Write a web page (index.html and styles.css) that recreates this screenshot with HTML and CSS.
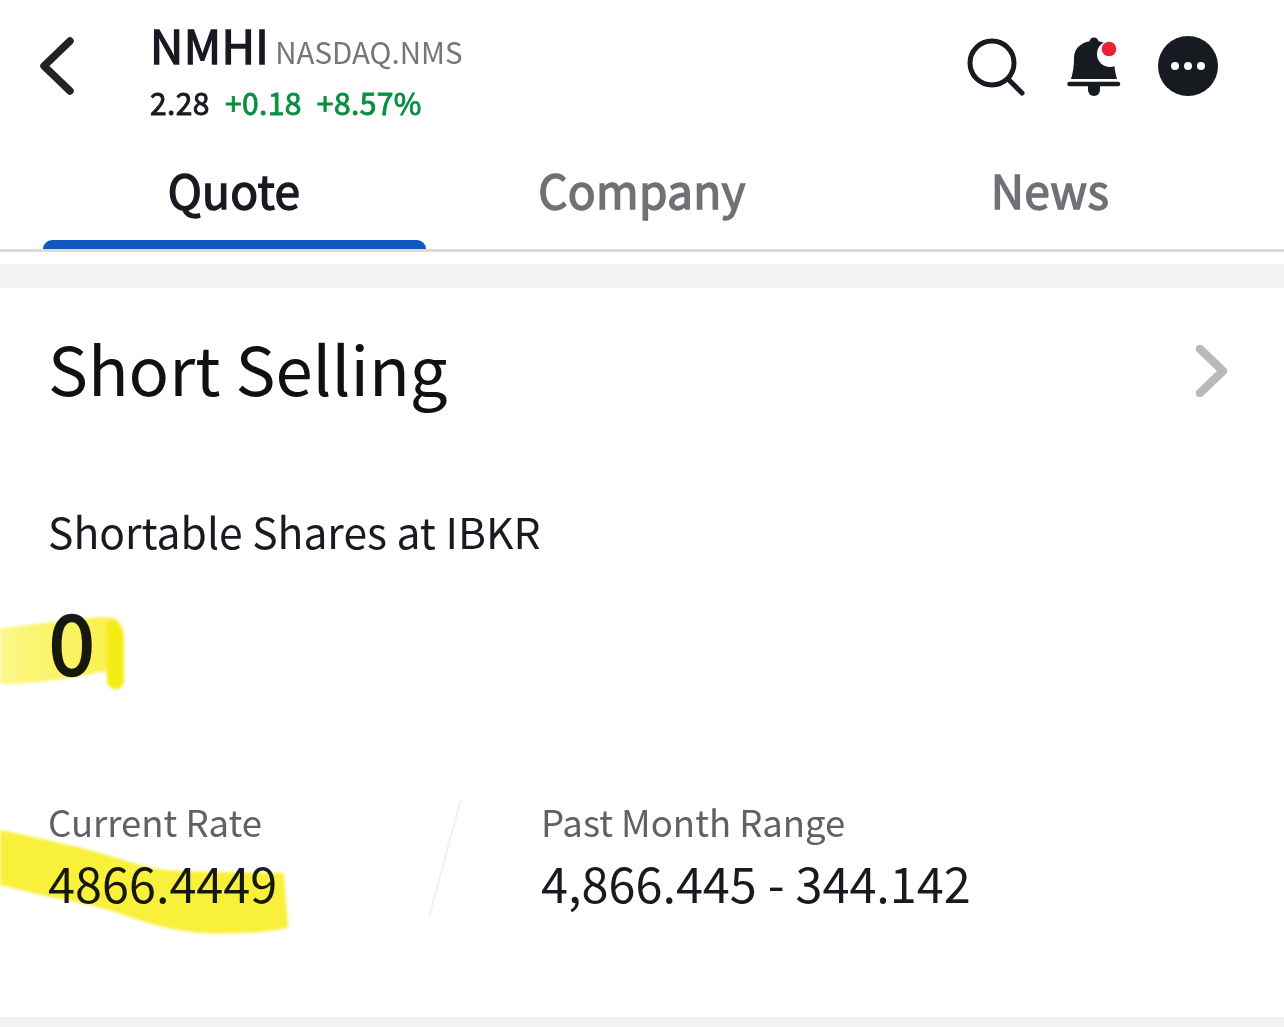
FILE: index.html
```html
<!DOCTYPE html>
<html lang="en">
<head>
<meta charset="utf-8">
<title>NMHI Short Selling</title>
<link rel="stylesheet" href="styles.css">
</head>
<body>
<div class="page">
  <header class="topbar">
    <svg class="back" width="36" height="60" viewBox="0 0 36 60"><path d="M32 5 L6 30 L32 55" fill="none" stroke="#212327" stroke-width="7.500" stroke-linecap="round" stroke-linejoin="round"/></svg>
    <div class="title">
      <div class="title-row"><span class="ticker">NMHI</span><span class="exchange">NASDAQ.NMS</span></div>
      <div class="price-row"><span class="price">2.28</span><span class="up">+0.18</span><span class="up">+8.57%</span></div>
    </div>
    <div class="actions">
      <svg class="search" width="60" height="60" viewBox="0 0 60 60"><circle cx="27" cy="27" r="22" fill="none" stroke="#171a21" stroke-width="5"/><path d="M43 43 L57 57" fill="none" stroke="#171a21" stroke-width="5" stroke-linecap="round"/></svg>
      <svg class="bell" width="54" height="62" viewBox="0 0 54 62">
        <circle cx="27" cy="6" r="4.500" fill="#171a21"/>
        <path d="M4 43 C6 36 7 30 7 22 C7 11 16 5 27 5 C38 5 47 11 47 22 C47 30 48 36 50 43 Z" fill="#171a21"/>
        <circle cx="43" cy="18" r="13" fill="#fff"/>
        <circle cx="42" cy="13" r="7.300" fill="#ea2332"/>
        <path d="M2.500 48 H51" stroke="#171a21" stroke-width="4.500" stroke-linecap="round"/>
        <path d="M21 50 H33 V54 A6 6 0 0 1 21 54 Z" fill="#171a21"/>
      </svg>
      <svg class="more" width="60" height="60" viewBox="0 0 60 60"><circle cx="30" cy="30" r="30" fill="#171a21"/><circle cx="17" cy="30" r="4" fill="#fff"/><circle cx="30" cy="30" r="4" fill="#fff"/><circle cx="43" cy="30" r="4" fill="#fff"/></svg>
    </div>
  </header>
  <nav class="tabs">
    <div class="tab active">Quote</div>
    <div class="tab">Company</div>
    <div class="tab">News</div>
  </nav>
  <div class="band"></div>
  <section class="card">
    <div class="card-head">
      <h1>Short Selling</h1>
      <svg class="chev" width="32" height="52" viewBox="0 0 32 52"><path d="M4 4 L27 26 L4 48" fill="none" stroke="#b9b9bb" stroke-width="8.500" stroke-linecap="round" stroke-linejoin="round"/></svg>
    </div>
    <div class="label-big">Shortable Shares at IBKR</div>
    <div class="zero">0</div>
    <div class="stats">
      <div class="stat first">
        <div class="stat-label">Current Rate</div>
        <div class="stat-value">4866.4449</div>
      </div>
      <div class="stat">
        <div class="stat-label">Past Month Range</div>
        <div class="stat-value">4,866.445 - 344.142</div>
      </div>
      <svg class="slash" width="36" height="120" viewBox="0 0 36 120"><path d="M34 1 L2 119" stroke="#f1f1f2" stroke-width="2" fill="none"/></svg>
    </div>
  </section>
  <div class="band-bottom"></div>
  <svg class="marker" width="1284" height="1027" viewBox="0 0 1284 1027">
    <defs>
      <filter id="soft" x="-10%" y="-10%" width="120%" height="120%"><feGaussianBlur stdDeviation="1.500"/></filter>
      <linearGradient id="fade" x1="0" x2="1" y1="0" y2="0">
        <stop offset="0" stop-color="#fcf78a"/>
        <stop offset="0.25" stop-color="#fbf572"/>
        <stop offset="1" stop-color="#f9f04a"/>
      </linearGradient>
    </defs>
    <g filter="url(#soft)">
      <path d="M0 628 C30 625 50 622 70 620 C85 618 105 616 113 618 C120 620 124 628 124 640 L124 680 C124 690 112 691 108 684 L106 671 C80 676 40 684 0 684 Z" fill="url(#fade)"/>
      <path d="M106 622 C118 616 124 628 124 642 L124 680 C123 692 110 692 107 682 Z" fill="#f4ec12"/>
      <path d="M0 830 C40 838 75 846 100 853 C125 860 145 868 167 870 C210 873 250 872 284 873 L288 928 C260 934 220 934 200 933 C170 930 150 924 130 917 C100 906 75 902 50 897 L0 885 Z" fill="#f8f03a"/>
    </g>
  </svg>
</div>
</body>
</html>
```
FILE: styles.css
```css
* { box-sizing: border-box; }
html, body { margin: 0; padding: 0; background: #fff; }
.page {
  position: relative;
  width: 1284px;
  height: 1027px;
  overflow: hidden;
  font-family: "Noto Sans CJK SC", "Noto Sans", sans-serif;
  color: #171a21;
}
.topbar {
  display: flex;
  align-items: flex-start;
  height: 148px;
  padding: 0 66px 0 38px;
}
.back { margin-top: 36px; flex: none; }
.title { margin-left: 76px; margin-top: 13px; }
.title-row { display: flex; align-items: baseline; gap: 6px; height: 66px; }
.ticker { font-size: 46px; -webkit-text-stroke: 1.4px currentColor; letter-spacing: 0.4px; line-height: 62px; }
.exchange { font-size: 29.5px; color: #75767b; line-height: 62px; }
.price-row { display: flex; gap: 15px; font-size: 30px; line-height: 46px; letter-spacing: 0.4px; -webkit-text-stroke: 0.9px currentColor; }
.up { color: #0a8f43; }
.actions { margin-left: auto; display: flex; align-items: flex-start; margin-top: 36px; }
.search { margin-top: 0; margin-right: 42px; margin-left: -4px; }
.bell { margin-right: 37px; margin-top: 0; }
.tabs {
  display: flex;
  height: 104px;
  padding: 0 30px;
  border-bottom: 3px solid #dcdcdd;
}
.tab {
  flex: 1;
  position: relative;
  text-align: center;
  font-size: 46px;
  -webkit-text-stroke: 1.4px currentColor;
  letter-spacing: 0.3px;
  line-height: 82px;
  color: #707176;
}
.tab.active { color: #171a21; }
.tab.active::after {
  content: "";
  position: absolute;
  left: 13px;
  right: 12px;
  bottom: 0;
  height: 9px;
  background: #1157c0;
  border-radius: 10px 10px 0 0;
}
.band { height: 24px; margin-top: 12px; background: #f2f2f2; }
.card { height: 729px; padding: 0 48px; }
.card-head {
  display: flex;
  align-items: center;
  justify-content: space-between;
  height: 166px;
  padding-right: 8px;
}
h1 { margin: 0 0 8px; font-size: 67px; font-weight: 400; color: #111; line-height: 150px; }
.label-big { font-size: 42.6px; line-height: 60px; margin-top: 47px; color: #171a21; }
.zero { font-size: 82px; -webkit-text-stroke: 2.5px currentColor; line-height: 110px; margin-top: 24px; margin-left: 1px; color: #171a21; }
.stats { position: relative; display: flex; margin-top: 101px; }
.stat { width: 493px; }
.stat-label { font-size: 36.5px; line-height: 52px; color: #606165; }
.stat-value { font-size: 48.6px; line-height: 70px; margin-top: -1px; color: #171a21; }
.slash { position: absolute; left: 379px; top: 2px; }
.band-bottom { height: 10px; background: #f2f2f2; }
.marker { position: absolute; left: 0; top: 0; mix-blend-mode: multiply; pointer-events: none; }
```
